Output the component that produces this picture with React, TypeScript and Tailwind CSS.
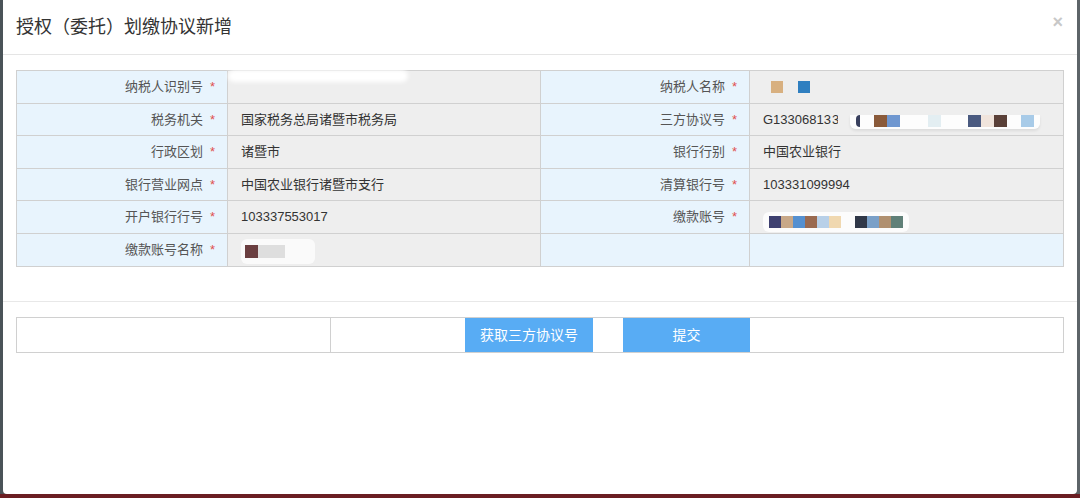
import React from 'react'

type Cell = { label: string; value?: React.ReactNode; empty?: boolean }

const px = (colors: string[], size = 12) => (
  <div className="flex items-center">
    {colors.map((c, i) => (
      <span key={i} className="inline-block" style={{ width: size, height: size, background: c }} />
    ))}
  </div>
)

const ROWS: [Cell, Cell][] = [
  [
    {
      label: '纳税人识别号',
      value: <div className="absolute -top-px left-0 h-[12px] w-[180px] rounded-full bg-white blur-[2px]" />,
    },
    {
      label: '纳税人名称',
      value: (
        <div className="flex items-center gap-[15px] pl-[8px]">
          <span className="inline-block h-[12px] w-[12px] bg-[#d8b080]" />
          <span className="inline-block h-[12px] w-[12px] bg-[#2f7fc0]" />
        </div>
      ),
    },
  ],
  [
    { label: '税务机关', value: '国家税务总局诸暨市税务局' },
    {
      label: '三方协议号',
      value: (
        <div className="flex items-center">
          <span>G13306813</span>
          <span className="ml-[1px] w-[6px] overflow-hidden">3</span>
          <div className="relative ml-[12px] mt-[6px] flex items-center rounded-b-md bg-white/90 px-[6px] pb-[2px] shadow-[0_2px_3px_rgba(0,0,0,0.08)]">
            <span className="inline-block h-[12px] w-[4px] rounded-l-sm bg-[#39405e]" />
            <span className="ml-[14px] inline-block h-[12px] w-[13px] bg-[#8a5a3a]" />
            <span className="inline-block h-[12px] w-[13px] bg-[#6f97d0]" />
            <span className="ml-[28px] inline-block h-[12px] w-[13px] bg-[#e3eef2]" />
            <span className="ml-[27px] inline-block h-[12px] w-[13px] bg-[#4a5a80]" />
            <span className="inline-block h-[12px] w-[13px] bg-[#f0e4dc]" />
            <span className="inline-block h-[12px] w-[13px] bg-[#5a4038]" />
            <span className="ml-[14px] inline-block h-[12px] w-[13px] bg-[#a8cbe8]" />
          </div>
        </div>
      ),
    },
  ],
  [
    { label: '行政区划', value: '诸暨市' },
    { label: '银行行别', value: '中国农业银行' },
  ],
  [
    { label: '银行营业网点', value: '中国农业银行诸暨市支行' },
    { label: '清算银行号', value: '103331099994' },
  ],
  [
    { label: '开户银行行号', value: '103337553017' },
    {
      label: '缴款账号',
      value: (
        <div className="mt-[10px] flex items-center rounded-md bg-white/80 px-[6px] py-[4px]">
          {px(['#3e4070', '#c8a888', '#5590d0', '#9a6a50', '#b8d0e8', '#f0d8b0'], 12)}
          <span className="w-[14px]" />
          {px(['#303848', '#7aa0c8', '#b09070', '#608078'], 12)}
        </div>
      ),
    },
  ],
  [
    {
      label: '缴款账号名称',
      value: (
        <div className="mt-[4px] flex items-center rounded-md bg-white/70 px-[4px] py-[6px] pr-[30px]">
          <span className="inline-block h-[13px] w-[13px] bg-[#6a3e40]" />
          <span className="inline-block h-[13px] w-[27px] bg-[#dedede]" />
        </div>
      ),
    },
    { label: '', empty: true },
  ],
]

function LabelCell({ label }: { label: string }) {
  return (
    <div className="flex h-full items-center justify-end border-r border-[#d0d0d0] bg-[#e8f4fd] pr-[12px] text-[13px] text-[#555]">
      {label && (
        <>
          <span>{label}</span>
          <span className="ml-[7px] text-[#e05050]">*</span>
        </>
      )}
    </div>
  )
}

function ValueCell({ cell, last }: { cell: Cell; last: boolean }) {
  return (
    <div
      className={`relative flex h-full items-center pl-[13px] text-[13px] text-[#333] ${
        cell.empty ? 'bg-[#e8f4fd]' : 'bg-[#eeeeee]'
      } ${last ? '' : 'border-r border-[#d0d0d0]'}`}
    >
      {cell.value}
    </div>
  )
}

export default function App() {
  return (
    <div
      className="h-[498px] w-[1080px] overflow-hidden bg-[#6b1e22]"
      style={{ fontFamily: '"Liberation Sans", "Noto Sans CJK SC", sans-serif' }}
    >
      <div className="flex h-[494px] border-l-[3px] border-r-[3px] border-l-[#4a5358] border-r-[#5d6468] bg-[#555]">
        <div className="flex flex-1 flex-col rounded-bl-[4px] rounded-br-[4px] bg-white">
          {/* header */}
          <div className="flex h-[55px] items-center justify-between border-b border-[#e5e5e5] pl-[13px] pr-[14px]">
            <h1 className="text-[18px] text-[#333]">授权（委托）划缴协议新增</h1>
            <span className="-mt-[10px] text-[18px] font-bold leading-none text-[#c8c8c8]">×</span>
          </div>

          {/* body */}
          <div className="border-b border-[#e8e8e8] px-[13px] pb-[34px] pt-[15px]">
            <div className="border border-[#d0d0d0]">
              {ROWS.map((row, i) => (
                <div
                  key={i}
                  className={`grid h-[32.5px] grid-cols-[211px_313px_209px_1fr] ${
                    i < ROWS.length - 1 ? 'border-b border-[#d0d0d0]' : ''
                  }`}
                >
                  <LabelCell label={row[0].label} />
                  <ValueCell cell={row[0]} last={false} />
                  <LabelCell label={row[1].label} />
                  <ValueCell cell={row[1]} last />
                </div>
              ))}
            </div>
          </div>

          {/* footer */}
          <div className="px-[13px] pt-[15px]">
            <div className="grid h-[36px] grid-cols-[314px_134px_128px_30px_127px_1fr] border border-[#d0d0d0]">
              <div className="border-r border-[#d0d0d0]" />
              <div />
              <button className="bg-[#58acf4] text-[14px] text-white">获取三方协议号</button>
              <div />
              <button className="bg-[#58acf4] text-[14px] text-white">提交</button>
              <div />
            </div>
          </div>
        </div>
      </div>
    </div>
  )
}
